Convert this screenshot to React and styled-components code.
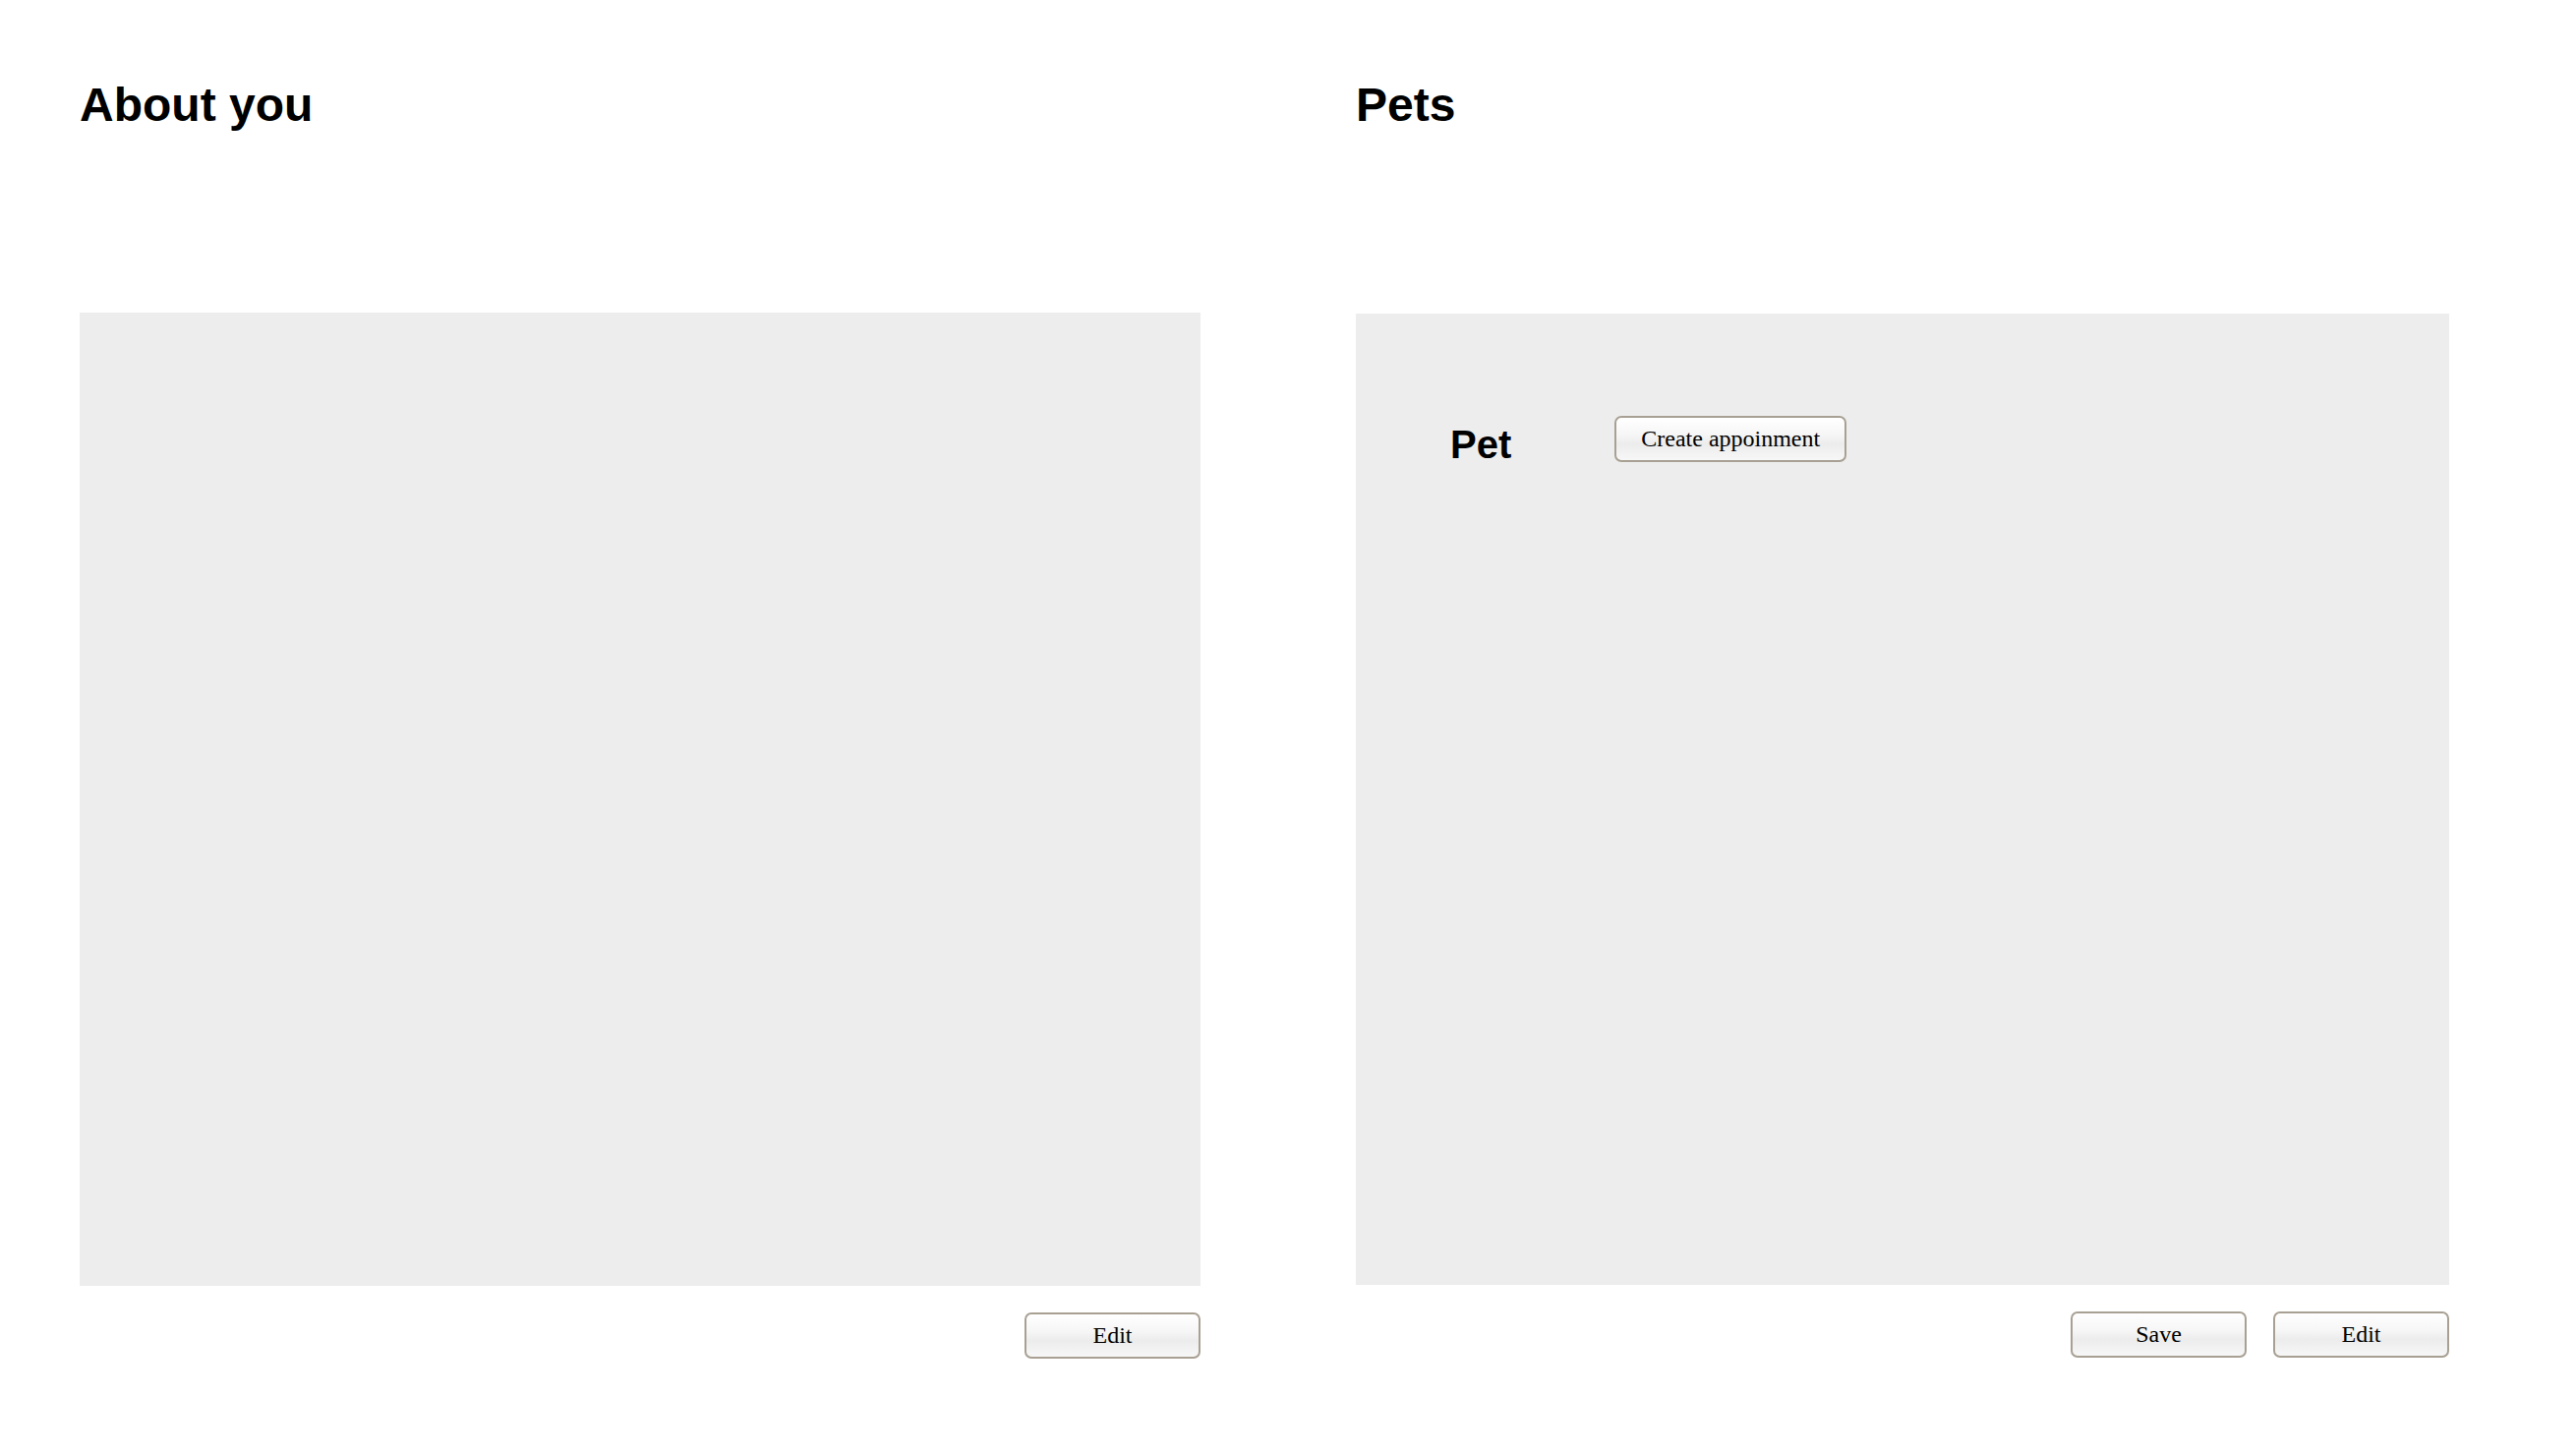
import React from 'react';
import styled, { createGlobalStyle } from 'styled-components';

const GlobalStyle = createGlobalStyle`
    html, body {
        margin: 0;
        padding: 0;
        background: #ffffff;
    }
    body {
        font-family: "Liberation Sans", Arial, sans-serif;
        color: #000;
    }
`;

const Page = styled.div`
    display: grid;
    grid-template-columns: 1140px 1112px;
    column-gap: 158px;
    padding: 79px 80px 0 81px;
    min-height: 1480px;
    box-sizing: border-box;
`;

const Column = styled.section`
    display: flex;
    flex-direction: column;
`;

const Heading = styled.h1`
    margin: 0;
    font-family: "Liberation Sans", Arial, sans-serif;
    font-size: 48px;
    font-weight: bold;
    line-height: 1.15;
`;

const Panel = styled.div`
    margin-top: ${props => props.$offset}px;
    height: ${props => props.$height}px;
    background: #ededed;
    box-sizing: border-box;
`;

const PetRow = styled.div`
    display: flex;
    align-items: flex-start;
    gap: 105px;
    padding: 104px 0 0 96px;
`;

const PetTitle = styled.h2`
    margin: 6px 0 0 0;
    font-family: "Liberation Sans", Arial, sans-serif;
    font-size: 40px;
    font-weight: bold;
    line-height: 1.15;
`;

const Actions = styled.div`
    display: flex;
    justify-content: flex-end;
    gap: 27px;
    margin-top: 27px;
`;

const Button = styled.button`
    height: 47px;
    width: ${props => (props.$wide ? 'auto' : '179px')};
    padding: 0 25px;
    border: 2px solid #a8a093;
    border-radius: 7px;
    background: linear-gradient(#ffffff 0%, #f6f6f6 40%, #ececec 62%, #f7f7f7 100%);
    font-family: "Liberation Serif", "Times New Roman", serif;
    font-size: 24px;
    color: #000;
    box-sizing: border-box;
    cursor: pointer;
`;

const App = () => {
    return (
        <>
            <GlobalStyle />
            <Page>
                <Column>
                    <Heading>About you</Heading>
                    <Panel $offset={184} $height={990} />
                    <Actions>
                        <Button>Edit</Button>
                    </Actions>
                </Column>
                <Column>
                    <Heading>Pets</Heading>
                    <Panel $offset={185} $height={988}>
                        <PetRow>
                            <PetTitle>Pet</PetTitle>
                            <Button $wide>Create appoinment</Button>
                        </PetRow>
                    </Panel>
                    <Actions>
                        <Button>Save</Button>
                        <Button>Edit</Button>
                    </Actions>
                </Column>
            </Page>
        </>
    );
};

export default App;
